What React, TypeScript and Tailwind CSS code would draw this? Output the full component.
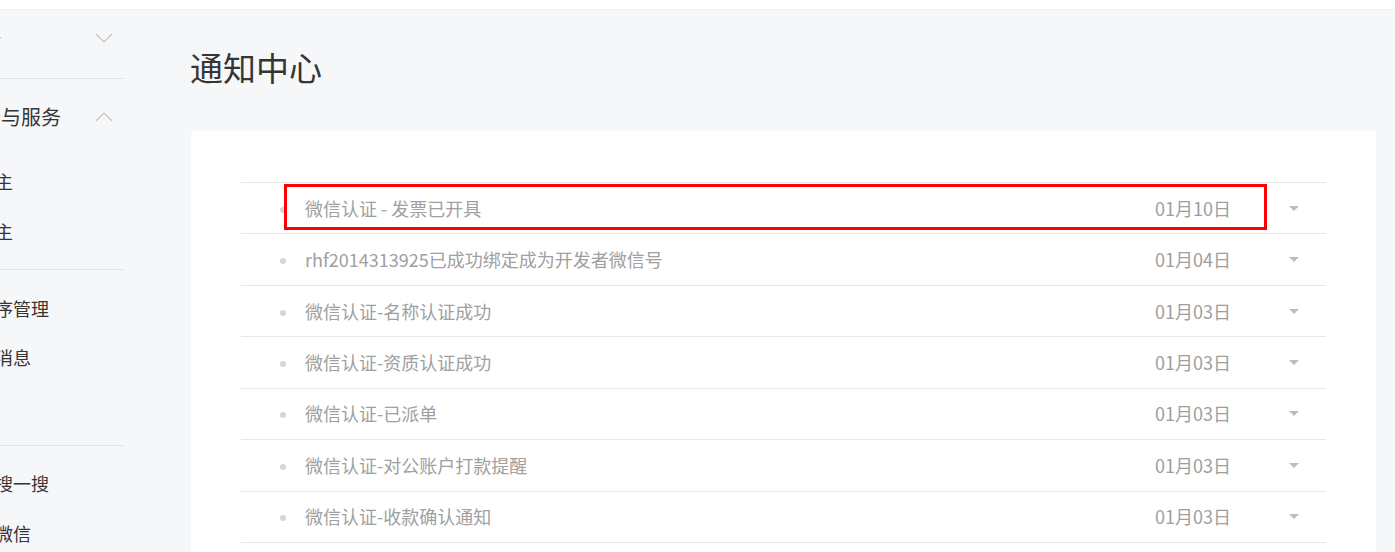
interface Notice {
  title: string;
  date: string;
}

const notices: Notice[] = [
  { title: '微信认证 - 发票已开具', date: '01月10日' },
  { title: 'rhf2014313925已成功绑定成为开发者微信号', date: '01月04日' },
  { title: '微信认证-名称认证成功', date: '01月03日' },
  { title: '微信认证-资质认证成功', date: '01月03日' },
  { title: '微信认证-已派单', date: '01月03日' },
  { title: '微信认证-对公账户打款提醒', date: '01月03日' },
  { title: '微信认证-收款确认通知', date: '01月03日' },
];

function Chevron({ up }: { up: boolean }) {
  return (
    <svg width="18" height="10" viewBox="0 0 18 10" fill="none">
      <polyline
        points={up ? '1,9 9,1 17,9' : '1,1 9,9 17,1'}
        stroke="#c2c2c2"
        strokeWidth="1.1"
      />
    </svg>
  );
}

function SideHeading({ label, open }: { label: string; open: boolean }) {
  return (
    <div className="flex items-center justify-between h-[50px] pr-[12px]">
      <span className="ml-[-39px] text-[20px] text-[#353535] whitespace-nowrap">{label}</span>
      <Chevron up={open} />
    </div>
  );
}

function SideItem({ label, h = 'h-[50px]' }: { label: string; h?: string }) {
  return (
    <div className={`flex items-center ${h}`}>
      <span className="ml-[-41px] text-[18px] text-[#353535] whitespace-nowrap">{label}</span>
    </div>
  );
}

function Sidebar() {
  return (
    <div className="w-[125px] shrink-0 overflow-hidden">
      <div className="pt-[3px] pb-[15px] border-b border-[#e4e5e8]">
        <SideHeading label="数据" open={false} />
      </div>
      <div className="pt-[13px] pb-[13px] border-b border-[#e4e5e8]">
        <div className="mb-[14px]">
          <SideHeading label="广告与服务" open={true} />
        </div>
        <SideItem label="广告主" />
        <SideItem label="流量主" />
      </div>
      <div className="pt-[14px] pb-[14px] border-b border-[#e4e5e8]">
        <SideItem label="小程序管理" h="h-[49px]" />
        <SideItem label="模板消息" h="h-[49px]" />
        <SideItem label="插件" h="h-[49px]" />
      </div>
      <div className="pt-[12px]">
        <SideItem label="微信搜一搜" />
        <SideItem label="企业微信" />
      </div>
    </div>
  );
}

function NoticeRow({ notice, marked }: { notice: Notice; marked: boolean }) {
  return (
    <div className="relative flex items-center h-[51.43px] pl-[39px] pr-[27px] border-b border-[#e7e7eb]">
      <span className="w-[6px] h-[6px] rounded-full bg-[#d5d5d5] mt-[3px]" />
      <span className="ml-[19px] flex-1 text-[18px] text-[#a0a0a0] whitespace-nowrap">{notice.title}</span>
      <span className="text-[18px] text-[#9e9e9e] whitespace-nowrap">{notice.date}</span>
      <span className="ml-[58px] w-[10px] flex justify-center">
        <svg width="10" height="5" viewBox="0 0 10 5">
          <polygon points="0,0 10,0 5,5" fill="#bdbdbd" />
        </svg>
      </span>
      {/* annotation box */}
      {marked && (
        <div className="absolute left-[43px] top-[1px] w-[983px] h-[46px] border-[3px] border-[#ff0000]" />
      )}
    </div>
  );
}

export default function App() {
  return (
    <div
      className="w-[1395px] h-[552px] overflow-hidden bg-[#f6f7f9]"
      style={{ fontFamily: '"Noto Sans CJK SC", "Noto Sans", sans-serif' }}
    >
      <div className="h-[10px] bg-white border-b border-[#eef0f3]" />
      <div className="flex">
        <Sidebar />
        <div className="flex-1 pl-[66px] pr-[19px]">
          <h1 className="pt-[41px] text-[33px] leading-[32px] text-[#353535] ml-[-1px]">通知中心</h1>
          <div className="mt-[48px] bg-white rounded-[4px] pt-[51px] px-[50px] pb-[40px]">
            <div className="border-t border-[#e7e7eb]">
              {notices.map((n, i) => (
                <NoticeRow key={i} notice={n} marked={i === 0} />
              ))}
            </div>
          </div>
        </div>
      </div>
    </div>
  );
}
